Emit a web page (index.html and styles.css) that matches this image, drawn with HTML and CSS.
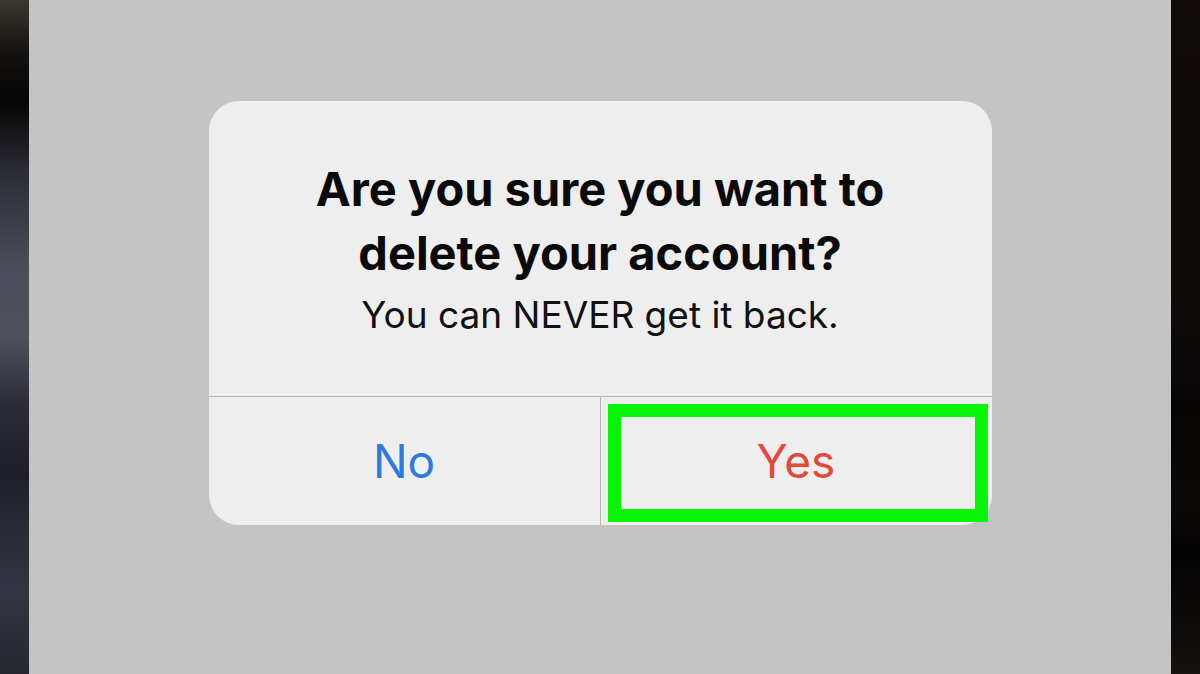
FILE: index.html
```html
<!DOCTYPE html>
<html lang="en">
<head>
<meta charset="utf-8">
<title>Delete account</title>
<link rel="stylesheet" href="styles.css">
</head>
<body>
<div class="screen">
  <div class="edge edge-left"></div>
  <main class="backdrop">
    <section class="alert">
      <div class="alert-body">
        <h1 class="alert-title">Are you sure you want to delete your account?</h1>
        <p class="alert-message">You can NEVER get it back.</p>
      </div>
      <div class="alert-actions">
        <button class="action action-no">No</button>
        <button class="action action-yes">Yes</button>
      </div>
      <div class="highlight"></div>
    </section>
  </main>
  <div class="edge edge-right"></div>
</div>
</body>
</html>
```
FILE: styles.css
```css
* { box-sizing: border-box; }
html, body {
  margin: 0;
  padding: 0;
  width: 1200px;
  height: 674px;
  overflow: hidden;
  font-family: Inter, "Liberation Sans", sans-serif;
}
.screen {
  display: flex;
  width: 1200px;
  height: 674px;
}
.edge { width: 29px; flex: none; }
.edge-left {
  background: linear-gradient(180deg,
    #3b362f 0%, #141210 8%, #050505 15%, #2a2b33 25%, #4b4d5a 40%,
    #4e505c 50%, #2b2c36 60%, #1e1f28 70%, #2a2c38 80%, #333542 88%, #25262e 100%);
}
.edge-right {
  background: linear-gradient(180deg,
    #100b09 0%, #0e0a08 40%, #0b0909 55%, #050403 60%, #0c0a08 75%, #030202 82%, #15120f 100%);
}
.backdrop {
  flex: 1;
  background: #c4c4c4;
  display: flex;
  justify-content: center;
  align-items: flex-start;
  padding-top: 101px;
}
.alert {
  position: relative;
  width: 783px;
  height: 424px;
  background: #eeeeee;
  border-radius: 30px;
  display: flex;
  flex-direction: column;
}
.alert-body {
  height: 296px;
  padding-top: 56px;
  text-align: center;
  border-bottom: 1px solid #b4b4b4;
}
.alert-title {
  margin: 0;
  font-size: 47px;
  line-height: 64px;
  font-weight: 700;
  color: #0a0a0a;
  padding: 0 100px;
}
.alert-message {
  margin: 6px 0 0;
  font-size: 37px;
  line-height: 48px;
  font-weight: 400;
  color: #111111;
}
.alert-actions {
  flex: 1;
  display: flex;
}
.action {
  flex: 1;
  border: 0;
  background: transparent;
  font-family: inherit;
  font-size: 46px;
  font-weight: 400;
  padding: 0;
  display: flex;
  align-items: center;
  justify-content: center;
}
.action-no {
  color: #2f78dd;
  border-right: 1px solid #b4b4b4;
}
.action-yes { color: #df4a3b; }
.highlight {
  position: absolute;
  left: 399px;
  top: 303px;
  width: 380px;
  height: 118px;
  border: 13px solid #08f508;
}
```
